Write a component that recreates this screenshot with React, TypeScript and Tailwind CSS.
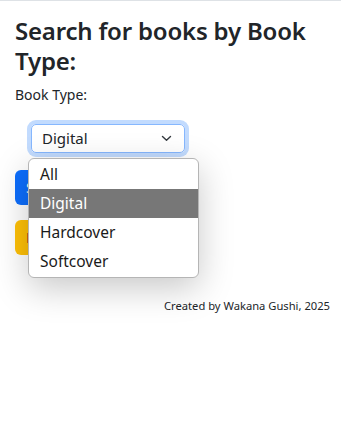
import React from "react";

export default function App() {
  const font = { fontFamily: '"Noto Sans", "Open Sans", sans-serif' };
  return (
    <div className="relative w-[341px] h-[447px] bg-white border-t border-[#dee2e6] text-[#212529] overflow-hidden" style={font}>
      <div className="px-[15px] pt-[15px]">
        <h2 className="text-[24px] leading-[30px] font-semibold tracking-[-0.2px] text-[#212529]">Search for books by Book Type:</h2>
        <div className="mt-[9px] text-[14px] leading-[20px]">Book Type:</div>
        <div className="mt-[19px] ml-[16px] w-[154px] h-[29px] rounded-[5px] border border-[#86b7fe] ring-4 ring-[#c2dbfe] flex items-center justify-between pl-[10px] pr-[12px] text-[15px]">
          <span>Digital</span>
          <svg width="11" height="7" viewBox="0 0 11 7" fill="none" stroke="#343a40" strokeWidth="1.4" strokeLinecap="round" strokeLinejoin="round">
            <path d="M1.5 1.5 L5.5 5.3 L9.5 1.5" />
          </svg>
        </div>
        <div className="mt-[17px] flex flex-col gap-[15px]">
          <div className="w-[80px] h-[35px] rounded-[6px] bg-[#0d6efd] text-white text-[15px] flex items-center pl-[11px]">Search</div>
          <div className="w-[80px] h-[35px] rounded-[6px] bg-[#ffc107] text-[#5a2a10] text-[15px] flex items-center pl-[11px]">Reset</div>
        </div>
        <div className="mt-[43px] mr-[-4px] text-right text-[11.2px]">Created by Wakana Gushi, 2025</div>
      </div>
      <div className="absolute left-[28px] top-[157px] w-[171px] rounded-[6px] border border-[#b5b5b5] bg-white py-[1px] shadow-[0_10px_35px_rgba(0,0,0,0.22)] text-[15.5px]">
        <div className="h-[29px] flex items-center pl-[11px] text-[#1a1a1a]">All</div>
        <div className="h-[29px] flex items-center pl-[11px] bg-[#777777] text-white">Digital</div>
        <div className="h-[29px] flex items-center pl-[11px] text-[#1a1a1a]">Hardcover</div>
        <div className="h-[29px] flex items-center pl-[11px] text-[#1a1a1a]">Softcover</div>
      </div>
    </div>
  );
}
